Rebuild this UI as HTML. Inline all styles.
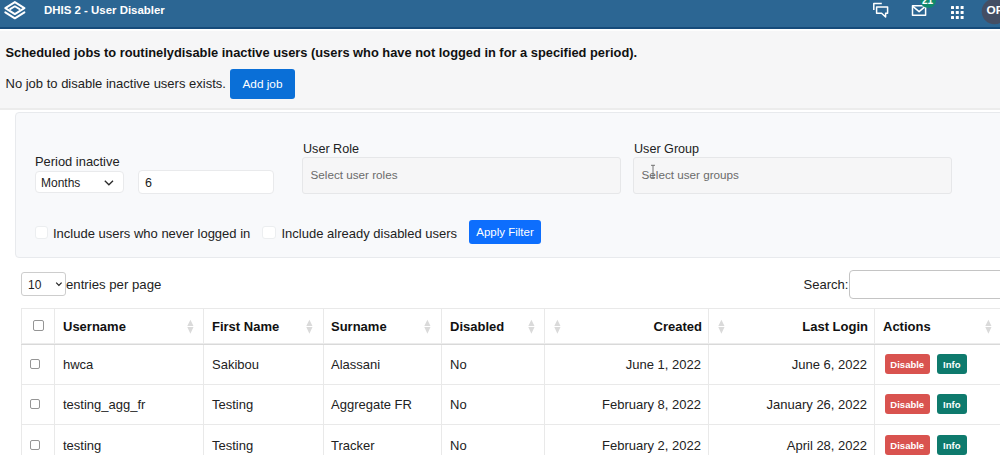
<!DOCTYPE html>
<html><head><meta charset="utf-8">
<style>
*{box-sizing:border-box;margin:0;padding:0}
html,body{width:1000px;height:465px;overflow:hidden;background:#fff;font-family:"Liberation Sans",sans-serif;color:#212529}
.abs{position:absolute}
#hdr{position:absolute;left:0;top:0;width:1000px;height:29px;background:#2c6693;border-bottom:2px solid #164b7a}
#hdr .title{position:absolute;left:44px;top:3.2px;font-size:11.45px;font-weight:bold;color:#fff;line-height:14px;letter-spacing:0}
#top{position:absolute;left:0;top:30px;width:1000px;height:80px;background:#f6f6f7;border-top:1px solid #fdfdfd;border-bottom:2px solid #ececec}
.t{position:absolute;white-space:nowrap;line-height:1}
.btn{position:absolute;border-radius:3px;color:#fff;text-align:center;white-space:nowrap}
#card{position:absolute;left:15px;top:112px;width:1000px;height:146px;background:#f8f9fb;border:1px solid #e8eaed;border-radius:4px}
.inp{position:absolute;background:#fff;border:1px solid #e9eaec;border-radius:4px}
.sel{position:absolute;background:#f6f6f7;border:1px solid #e6e7e9;border-radius:3px}
.cb{position:absolute;width:13px;height:13px;background:#fff;border:1px solid #eceef0;border-radius:3px}
table{position:absolute;left:21px;top:308px;border-collapse:collapse;table-layout:fixed}
.vl{position:absolute;width:1px;background:#e9e9e9}
.hl{position:absolute;height:1px;background:#e9e9e9}
.tc{position:absolute;width:10px;height:10px;border:1px solid #959595;border-radius:2px;background:#fff}
.sort{position:absolute;width:7px;height:14px}
.dis{position:absolute;width:45.5px;height:20px;background:#d9534f;border-radius:3px;color:#fff;font-size:9.5px;font-weight:bold;line-height:22.5px;text-align:center}
.info{position:absolute;width:29.6px;height:20px;background:#0e7a6d;border-radius:3px;color:#fff;font-size:9.5px;font-weight:bold;line-height:22.5px;text-align:center}
</style></head><body>
<div id="hdr">
  <svg class="abs" style="left:0;top:0" width="32" height="28" viewBox="0 0 32 28">
    <g fill="none" stroke="#fff" stroke-width="2" stroke-linejoin="round" stroke-linecap="round">
      <path d="M14.85 2.1 L24.4 8.1 L14.85 14.1 L5.3 8.1 Z"/>
      <path d="M10.1 9.1 L14.85 6.3 L19.6 9.1" stroke-width="1.8"/>
      <path d="M5.3 12.3 L14.85 18.3 L24.4 12.3"/>
    </g>
  </svg>
  <svg class="abs" style="left:860px;top:0" width="140" height="29" viewBox="0 0 140 29">
    <g fill="none" stroke="#fff" stroke-width="1.5" stroke-linejoin="round">
      <path d="M13.8 10 L13.8 3.6 L21.8 3.6"/>
      <path d="M16.6 6.9 L27.6 6.9 L27.6 13.3 L25.6 13.3 L25.6 17 L21.6 13.3 L16.6 13.3 Z"/>
      <path d="M52.5 5.8 L65.6 5.8 L65.6 15.2 L52.5 15.2 Z"/>
      <path d="M52.5 6.2 L59.1 11.6 L65.6 6.2"/>
    </g>
    <rect x="60.5" y="-8" width="15.5" height="15.7" rx="7" fill="#0f8a6c"/>
        <g fill="#fff">
      <rect x="91" y="6" width="3" height="3" rx="0.5"/><rect x="95.8" y="6" width="3" height="3" rx="0.5"/><rect x="100.6" y="6" width="3" height="3" rx="0.5"/>
      <rect x="91" y="11" width="3" height="3" rx="0.5"/><rect x="95.8" y="11" width="3" height="3" rx="0.5"/><rect x="100.6" y="11" width="3" height="3" rx="0.5"/>
      <rect x="91" y="16" width="3" height="3" rx="0.5"/><rect x="95.8" y="16" width="3" height="3" rx="0.5"/><rect x="100.6" y="16" width="3" height="3" rx="0.5"/>
    </g>
    <circle cx="134.5" cy="11.5" r="12.8" fill="#444e64"/>
      </svg>
  <div class="t" style="left:922px;top:-4px;font-size:10px;font-weight:bold;color:#fff;line-height:10px">21</div>
  <div class="t" style="left:986.5px;top:5px;font-size:11.8px;font-weight:bold;color:#fff">OP</div>
  <div class="title">DHIS 2 - User Disabler</div>
</div>
<div id="top">
  <div class="t" style="left:5.5px;top:15.5px;font-size:12.85px;font-weight:bold;color:#111">Scheduled jobs to routinelydisable inactive users (users who have not logged in for a specified period).</div>
  <div class="t" style="left:5.5px;top:46px;font-size:13px;color:#222">No job to disable inactive users exists.</div>
  <div class="btn" style="left:230px;top:38px;width:65px;height:30px;background:#0a6fd7;font-size:11.8px;line-height:30px">Add job</div>
</div>
<div id="card"></div>
<div class="t" style="left:35px;top:155.5px;font-size:12.9px;color:#222">Period inactive</div>
<div class="inp" style="left:35px;top:171px;width:89px;height:22px"></div>
<div class="t" style="left:41px;top:177px;font-size:12px;color:#222">Months</div>
<svg class="abs" style="left:103px;top:179px" width="12" height="8" viewBox="0 0 12 8"><path d="M1.8 1.8 L5.9 5.8 L10 1.8" fill="none" stroke="#2a2a2a" stroke-width="1.3"/></svg>
<div class="inp" style="left:138px;top:170px;width:135.5px;height:24px"></div>
<div class="t" style="left:145px;top:176.5px;font-size:12.5px;color:#222">6</div>
<div class="t" style="left:303px;top:143px;font-size:12.6px;color:#222">User Role</div>
<div class="sel" style="left:302px;top:157px;width:319px;height:37px"></div>
<div class="t" style="left:310.5px;top:169px;font-size:11.7px;color:#6b6b6b">Select user roles</div>
<div class="t" style="left:634px;top:143px;font-size:12.6px;color:#222">User Group</div>
<div class="sel" style="left:633px;top:157px;width:319px;height:37px"></div>
<div class="t" style="left:641.5px;top:169px;font-size:11.7px;color:#6b6b6b">Select user groups</div>
<svg class="abs" style="left:650px;top:164px" width="6" height="16" viewBox="0 0 6 16"><path d="M1 1.3 L5 1.3 M3 1.3 L3 13.8 M1 13.8 L5 13.8" fill="none" stroke="#666" stroke-width="0.9"/></svg>
<div class="cb" style="left:34.5px;top:225.5px;width:13.5px;height:13.5px"></div>
<div class="t" style="left:53px;top:227px;font-size:13px;color:#222">Include users who never logged in</div>
<div class="cb" style="left:262px;top:225.5px;width:13.5px;height:13.5px"></div>
<div class="t" style="left:281.5px;top:227px;font-size:13px;color:#222">Include already disabled users</div>
<div class="btn" style="left:469px;top:220px;width:72px;height:24px;background:#0d6efd;font-size:11.5px;line-height:24px">Apply Filter</div>
<div id="tbl">
<div class="t" style="left:0;top:0"></div>
<div class="abs" style="left:21px;top:272px;width:45px;height:24px;border:1px solid #cdcdcd;border-radius:3px;background:#fff"></div>
<div class="t" style="left:28px;top:279px;font-size:12px;color:#222">10</div>
<svg class="abs" style="left:54px;top:281px" width="9" height="6" viewBox="0 0 9 6"><path d="M2.2 1.6 L4.9 4.4 L7.6 1.6" fill="none" stroke="#222" stroke-width="1.2"/></svg>
<div class="t" style="left:66px;top:278px;font-size:13.2px;color:#222">entries per page</div>
<div class="t" style="left:803.5px;top:278px;font-size:13px;color:#222">Search:</div>
<div class="abs" style="left:849px;top:270px;width:200px;height:29px;border:1px solid #c4c4c4;border-radius:4px;background:#fff"></div>
<div class="vl" style="left:21px;top:308px;height:147px"></div>
<div class="vl" style="left:54px;top:308px;height:147px"></div>
<div class="vl" style="left:203px;top:308px;height:147px"></div>
<div class="vl" style="left:323px;top:308px;height:147px"></div>
<div class="vl" style="left:441px;top:308px;height:147px"></div>
<div class="vl" style="left:544px;top:308px;height:147px"></div>
<div class="vl" style="left:708px;top:308px;height:147px"></div>
<div class="vl" style="left:874px;top:308px;height:147px"></div>
<div class="hl" style="left:21px;top:308px;width:979px"></div>
<div class="hl" style="left:21px;top:384px;width:979px"></div>
<div class="hl" style="left:21px;top:424px;width:979px"></div>
<div class="hl" style="left:21px;top:343px;width:979px;height:1px;background:#ececec"></div><div class="hl" style="left:21px;top:344px;width:979px;height:1px;background:#d9d9d9"></div>
<svg class="abs" style="left:186.5px;top:319px" width="7" height="15" viewBox="0 0 7 15"><path d="M3.4 0.8 L6.5 6.9 L0.3 6.9 Z M0.3 7.9 L6.5 7.9 L3.4 14.8 Z" fill="#dadada"/></svg>
<svg class="abs" style="left:306px;top:319px" width="7" height="15" viewBox="0 0 7 15"><path d="M3.4 0.8 L6.5 6.9 L0.3 6.9 Z M0.3 7.9 L6.5 7.9 L3.4 14.8 Z" fill="#dadada"/></svg>
<svg class="abs" style="left:424px;top:319px" width="7" height="15" viewBox="0 0 7 15"><path d="M3.4 0.8 L6.5 6.9 L0.3 6.9 Z M0.3 7.9 L6.5 7.9 L3.4 14.8 Z" fill="#dadada"/></svg>
<svg class="abs" style="left:528px;top:319px" width="7" height="15" viewBox="0 0 7 15"><path d="M3.4 0.8 L6.5 6.9 L0.3 6.9 Z M0.3 7.9 L6.5 7.9 L3.4 14.8 Z" fill="#dadada"/></svg>
<svg class="abs" style="left:553.5px;top:319px" width="7" height="15" viewBox="0 0 7 15"><path d="M3.4 0.8 L6.5 6.9 L0.3 6.9 Z M0.3 7.9 L6.5 7.9 L3.4 14.8 Z" fill="#dadada"/></svg>
<svg class="abs" style="left:717.5px;top:319px" width="7" height="15" viewBox="0 0 7 15"><path d="M3.4 0.8 L6.5 6.9 L0.3 6.9 Z M0.3 7.9 L6.5 7.9 L3.4 14.8 Z" fill="#dadada"/></svg>
<svg class="abs" style="left:984.5px;top:319px" width="7" height="15" viewBox="0 0 7 15"><path d="M3.4 0.8 L6.5 6.9 L0.3 6.9 Z M0.3 7.9 L6.5 7.9 L3.4 14.8 Z" fill="#dadada"/></svg>
<div class="tc" style="left:33px;top:320px;width:11px;height:11px"></div>
<div class="t" style="left:63px;top:320px;font-size:13px;font-weight:bold;color:#111">Username</div>
<div class="t" style="left:212px;top:320px;font-size:13px;font-weight:bold;color:#111">First Name</div>
<div class="t" style="left:331px;top:320px;font-size:13px;font-weight:bold;color:#111">Surname</div>
<div class="t" style="left:450px;top:320px;font-size:13px;font-weight:bold;color:#111">Disabled</div>
<div class="t" style="right:298px;top:320px;font-size:13px;font-weight:bold;color:#111">Created</div>
<div class="t" style="right:132px;top:320px;font-size:13px;font-weight:bold;color:#111">Last Login</div>
<div class="t" style="left:883px;top:320px;font-size:13px;font-weight:bold;color:#111">Actions</div>
<div class="tc" style="left:30px;top:359.0px"></div>
<div class="t" style="left:63px;top:358.0px;font-size:13px;color:#222">hwca</div>
<div class="t" style="left:212px;top:358.0px;font-size:13px;color:#222">Sakibou</div>
<div class="t" style="left:331px;top:358.0px;font-size:13px;color:#222">Alassani</div>
<div class="t" style="left:450px;top:358.0px;font-size:13px;color:#222">No</div>
<div class="t" style="right:299px;top:358.0px;font-size:13px;color:#222">June 1, 2022</div>
<div class="t" style="right:133px;top:358.0px;font-size:13px;color:#222">June 6, 2022</div>
<div class="dis" style="left:884.5px;top:354.0px">Disable</div>
<div class="info" style="left:937px;top:354.0px">Info</div>
<div class="tc" style="left:30px;top:399.4px"></div>
<div class="t" style="left:63px;top:398.4px;font-size:13px;color:#222">testing_agg_fr</div>
<div class="t" style="left:212px;top:398.4px;font-size:13px;color:#222">Testing</div>
<div class="t" style="left:331px;top:398.4px;font-size:13px;color:#222">Aggregate FR</div>
<div class="t" style="left:450px;top:398.4px;font-size:13px;color:#222">No</div>
<div class="t" style="right:299px;top:398.4px;font-size:13px;color:#222">February 8, 2022</div>
<div class="t" style="right:133px;top:398.4px;font-size:13px;color:#222">January 26, 2022</div>
<div class="dis" style="left:884.5px;top:394.4px">Disable</div>
<div class="info" style="left:937px;top:394.4px">Info</div>
<div class="tc" style="left:30px;top:439.8px"></div>
<div class="t" style="left:63px;top:438.8px;font-size:13px;color:#222">testing</div>
<div class="t" style="left:212px;top:438.8px;font-size:13px;color:#222">Testing</div>
<div class="t" style="left:331px;top:438.8px;font-size:13px;color:#222">Tracker</div>
<div class="t" style="left:450px;top:438.8px;font-size:13px;color:#222">No</div>
<div class="t" style="right:299px;top:438.8px;font-size:13px;color:#222">February 2, 2022</div>
<div class="t" style="right:133px;top:438.8px;font-size:13px;color:#222">April 28, 2022</div>
<div class="dis" style="left:884.5px;top:434.8px">Disable</div>
<div class="info" style="left:937px;top:434.8px">Info</div>
<div class="abs" style="left:0;top:455px;width:1000px;height:10px;background:#fff"></div>
</div>
</body></html>
